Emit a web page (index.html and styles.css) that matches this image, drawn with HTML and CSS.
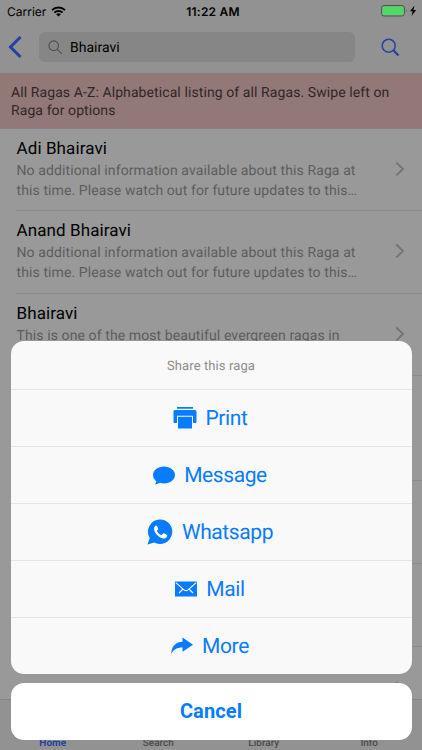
FILE: index.html
```
<!DOCTYPE html>
<html lang="en">
<head>
<meta charset="utf-8">
<title>All Ragas</title>
<link rel="stylesheet" href="styles.css">
</head>
<body>
<main class="screen">
  <header class="header">
    <div class="status">
      <div class="carrier"><span>Carrier</span>
        <svg width="15" height="11" viewBox="0 0 15 11"><path d="M1 4.1a9.4 9.4 0 0 1 13 0M3.4 6.600a6 6 0 0 1 8.200 0" fill="none" stroke="#000" stroke-width="1.900"/><path d="M5.200 8.300a3.400 3.400 0 0 1 4.600 0L7.500 10.600z"/></svg>
      </div>
      <time>11:22 AM</time>
      <svg class="battery" width="36" height="12" viewBox="0 0 36 12"><rect x=".5" y=".5" width="23" height="10.5" rx="2.5" fill="none" stroke="#555"/><rect x="1.5" y="1.5" width="21" height="8.5" rx="1.5" fill="#4cd964"/><path d="M25 4q1.4 1.7 0 3.5z" fill="#555"/><path d="M33.5 .5L29 6.3h2.7L30.5 11l4.7-6.1h-2.8z"/></svg>
    </div>
    <div class="toolbar">
      <svg class="back" width="14" height="22" viewBox="0 0 14 22"><path d="M12.500 1L2.500 11l10 10" fill="none" stroke="#2741a0" stroke-width="3"/></svg>
      <div class="field"><svg width="15" height="15" viewBox="0 0 15 15"><path d="M9.300 9.300l4.500 4.500M10.500 5.700a4.800 4.800 0 1 1-9.600 0a4.800 4.800 0 0 1 9.600 0z" fill="none" stroke="#505050" stroke-width="1.100"/></svg><span>Bhairavi</span></div>
      <svg class="find" width="19" height="19" viewBox="0 0 19 19"><circle cx="7.700" cy="7.700" r="6.500" fill="none" stroke="#2741a0" stroke-width="1.500"/><path d="M12.300 12.300l5.200 5.200" stroke="#2741a0" stroke-width="2.300"/></svg>
    </div>
  </header>
  <p class="banner">All Ragas A-Z: Alphabetical listing of all Ragas. Swipe left on<br>Raga for options</p>
  <section class="list">
    <article class="row"><div><h2>Adi Bhairavi</h2><p>No additional information available about this Raga at<br>this time. Please watch out for future updates to this…</p></div><svg class="chev" width="10" height="16" viewBox="0 0 10 16"><path d="M1.300 1.500L8 8l-6.700 6.500"/></svg></article>
    <article class="row"><div><h2>Anand Bhairavi</h2><p>No additional information available about this Raga at<br>this time. Please watch out for future updates to this…</p></div><svg class="chev" width="10" height="16" viewBox="0 0 10 16"><path d="M1.300 1.500L8 8l-6.700 6.500"/></svg></article>
    <article class="row"><div><h2>Bhairavi</h2><p>This is one of the most beautiful evergreen ragas in</p></div><svg class="chev" width="10" height="16" viewBox="0 0 10 16"><path d="M1.300 1.500L8 8l-6.700 6.500"/></svg></article>
    <div class="row tall"></div>
    <div class="row"></div>
    <div class="row"></div>
    <div class="row last"><svg class="chev" width="10" height="16" viewBox="0 0 10 16"><path d="M1.300 1.500L8 8l-6.700 6.500"/></svg></div>
  </section>
  <nav class="tabs"><span class="active">Home</span><span>Search</span><span>Library</span><span>Info</span></nav>
  <div class="sheet">
    <div class="options">
      <div class="title">Share this raga</div>
      <div class="option"><svg width="24" height="22" viewBox="0 0 24 22"><path d="M4 0h16v1.700H4zM2 3h20q1.500 0 1.500 1.500V15q0 1-1 1H20V8.700H4V16H1.500q-1 0-1-1V4.500Q.5 3 2 3zM5 9.700h14V21.500H5z"/></svg><span>Print</span></div>
      <div class="option"><svg width="22" height="19" viewBox="0 0 22 19"><path d="M11 .5C5 .5 0 4.200 0 9c0 2.500 1.300 4.700 3.400 6.200C3.200 16.700 2.400 17.700 1.500 18.300c2.300 0 4.300-.8 5.500-1.600 1.200.5 2.600.7 4 .7 6.100 0 11-3.700 11-8.400S17.100.5 11 .5z"/></svg><span>Message</span></div>
      <div class="option"><svg width="26" height="26" viewBox="0 0 26 26"><path d="M13.200.5A12.200 12.200 0 0 0 2.700 19L.5 25.500l6.700-2.100A12.200 12.200 0 1 0 13.200.5z"/><path class="handset" d="M9.200 6.500c-.6 0-2.200 1-2.200 3.400 0 4.200 5.600 9.600 9.800 9.500 2.200 0 3.500-1.500 3.500-3 0-.7-3.300-2.100-3.800-2.100-.6 0-1.400 1.900-2 1.800-1.300-.2-4.400-3-4.500-4.100 0-.6 1.300-1.300 1.300-2 0-.5-1.200-3.500-2.100-3.500z"/></svg><span>Whatsapp</span></div>
      <div class="option"><svg width="22" height="16" viewBox="0 0 22 16"><path d="M0 .5h22v15H0z"/><path class="fold" d="M.8 1.700L9 8.800q2 1.700 4 0l8.200-7.100M4 12L8 8M18 12L14 8"/></svg><span>Mail</span></div>
      <div class="option"><svg width="22" height="18" viewBox="0 0 22 18"><path d="M11.500.5L22 7.800l-10.500 7V10.500C6 10.500 2.500 12.500.3 17 .3 10 4 5.200 11.500 4.800z"/></svg><span>More</span></div>
    </div>
    <button class="cancel">Cancel</button>
  </div>
</main>
</body>
</html>
```
FILE: styles.css
```
* { box-sizing: border-box; }
body { margin: 0; font-family: Roboto, sans-serif; text-rendering: geometricPrecision; }
svg { display: block; flex: none; }
h2, p { margin: 0; font-weight: 400; }
.screen { position: relative; width: 422px; height: 750px; overflow: hidden; background: #999; white-space: nowrap; }
.header { height: 74px; background: #929292; border-bottom: 1px solid #897f7f; }
.status { height: 22px; display: grid; grid-template-columns: 1fr auto 1fr; align-items: center; padding: 0 5px 0 7px; font: 12px Inter, sans-serif; }
.carrier { display: flex; align-items: center; gap: 5px; }
.status time { font-weight: 600; letter-spacing: .2px; margin-left: 2px; }
.battery { justify-self: end; }
.toolbar { height: 51px; display: flex; align-items: center; padding: 0 22px 1px 8px; }
.field { width: 316px; height: 30px; margin-left: 17px; margin-right: 25.500px; padding-left: 9px; display: flex; align-items: center; gap: 7px; border-radius: 6px; background: #868686; font-size: 14px; }
.field span { padding-top: 2px; }
.banner { height: 55px; padding: 11px 11px 8px; background: #937878; border-bottom: 1px solid #897f7f; color: #302727; font-size: 14px; line-height: 17.500px; letter-spacing: .09px; }
.row { height: 82.700px; margin-left: 16px; padding-right: 17px; display: flex; justify-content: space-between; align-items: center; border-bottom: 1px solid #8d8d8d; }
.row:first-child { height: 82px; }
.row > div { align-self: flex-start; padding: 8px 0 0 .5px; }
.row h2 { font-size: 17px; line-height: 24px; letter-spacing: .1px; }
.row p { padding-top: 1.300px; color: #5d5d5d; font-size: 14px; line-height: 19.200px; letter-spacing: .1px; }
.row.tall { height: 105px; }
.row.last { height: 86px; }
.chev { fill: none; stroke: #747474; stroke-width: 1.800; margin: -1px 0 0 auto; }
.tabs { position: absolute; left: 0; right: 0; bottom: 0; height: 51px; display: grid; grid-template-columns: repeat(4, 1fr); align-items: end; text-align: center; background: #929292; border-top: 1px solid #858585; color: #4c4c4c; font-size: 10px; line-height: 13px; font-weight: 500; }
.tabs .active { color: #2741a0; font-weight: 700; }
.sheet { position: absolute; left: 10.500px; top: 341px; width: 401px; }
.options { height: 333px; overflow: hidden; border-radius: 13px; background: #f9f9f9; }
.title { height: 48px; padding-top: 2px; display: grid; place-items: center; color: #8d8d8d; font-size: 13px; letter-spacing: .1px; }
.option { height: 57px; padding-right: 2px; display: flex; align-items: center; justify-content: center; gap: 9px; border-top: 1px solid #e5e5e7; color: #087cff; font-size: 21px; letter-spacing: -.4px; }
.option span { padding-top: 2px; }
.option svg { fill: #087cff; }
.option .handset { fill: #f9f9f9; }
.option .fold { fill: none; stroke: #f9f9f9; stroke-width: 1.100; }
.cancel { display: block; width: 100%; height: 57.500px; margin-top: 8.500px; border: 0; border-radius: 13px; background: #fff; color: #087cff; font: 700 20px Roboto, sans-serif; letter-spacing: .1px; }
```
